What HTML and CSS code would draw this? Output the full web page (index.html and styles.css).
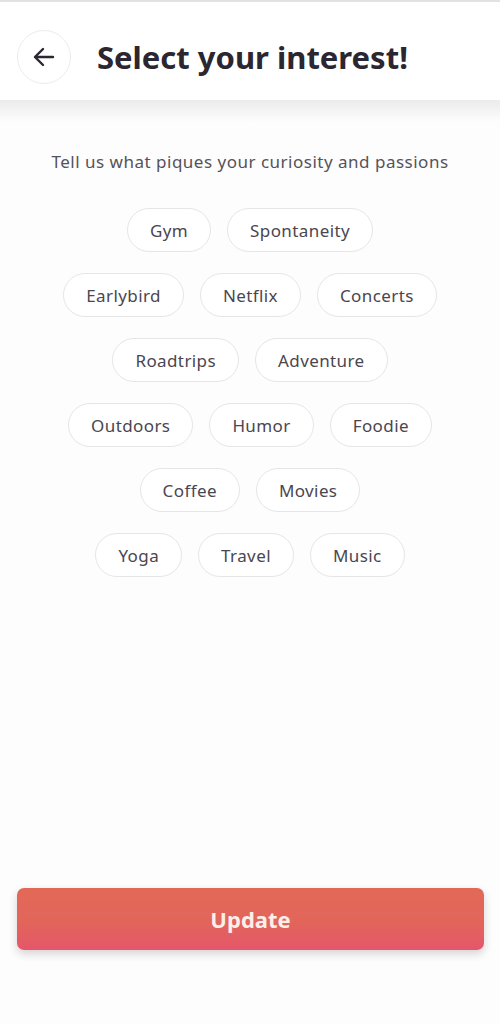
FILE: index.html
```html
<!DOCTYPE html>
<html lang="en">
<head>
  <meta charset="UTF-8">
  <meta name="viewport" content="width=device-width, initial-scale=1.0">
  <title>Select your interest</title>
  <link rel="stylesheet" href="styles.css">
</head>
<body>
  <div class="screen">
    <header class="top-bar">
      <button class="back-button" aria-label="Back">
        <svg width="22" height="20" viewBox="0 0 22 20" fill="none" stroke="#2b2630" stroke-width="2.4" stroke-linecap="round" stroke-linejoin="round">
          <line x1="20" y1="10" x2="2.5" y2="10"/>
          <polyline points="10,2 2,10 10,18"/>
        </svg>
      </button>
      <h1>Select your interest!</h1>
    </header>
    <div class="top-shadow"></div>

    <main class="content">
      <p class="subtitle">Tell us what piques your curiosity and passions</p>

      <div class="interests">
        <div class="interest-row">
          <span class="chip">Gym</span>
          <span class="chip">Spontaneity</span>
        </div>
        <div class="interest-row">
          <span class="chip">Earlybird</span>
          <span class="chip">Netflix</span>
          <span class="chip">Concerts</span>
        </div>
        <div class="interest-row">
          <span class="chip">Roadtrips</span>
          <span class="chip">Adventure</span>
        </div>
        <div class="interest-row">
          <span class="chip">Outdoors</span>
          <span class="chip">Humor</span>
          <span class="chip">Foodie</span>
        </div>
        <div class="interest-row">
          <span class="chip">Coffee</span>
          <span class="chip">Movies</span>
        </div>
        <div class="interest-row">
          <span class="chip">Yoga</span>
          <span class="chip">Travel</span>
          <span class="chip">Music</span>
        </div>
      </div>
    </main>

    <footer class="actions">
      <button class="update-button">Update</button>
    </footer>
  </div>
</body>
</html>
```

FILE: styles.css
```css
:root {
  --text-dark: #2b2630;
  --text-chip: #4a4650;
  --text-muted: #55525a;
  --chip-border: #e6e6e6;
  --accent-top: #e26957;
  --accent-bottom: #e5566a;
}

* {
  box-sizing: border-box;
}

body {
  margin: 0;
  background: #fdfdfd;
  font-family: "Noto Sans", "Open Sans", sans-serif;
  color: var(--text-dark);
}

.screen {
  height: 1024px;
  display: flex;
  flex-direction: column;
  border-top: 2px solid #e2e2e2;
}

.top-bar {
  height: 98px;
  display: flex;
  align-items: center;
  gap: 26px;
  padding: 12px 17px 0;
  background: #fff;
}

.top-shadow {
  height: 22px;
  background: linear-gradient(#ebebeb, rgba(253, 253, 253, 0));
}

.back-button {
  width: 54px;
  height: 54px;
  border-radius: 50%;
  border: 1px solid #ececec;
  background: #fff;
  display: flex;
  align-items: center;
  justify-content: center;
  padding: 0;
}

.top-bar h1 {
  margin: 0;
  font-size: 31px;
  font-weight: 700;
  color: var(--text-dark);
}

.content {
  flex: 1;
  padding-top: 28px;
}

.subtitle {
  margin: 0 0 35px;
  text-align: center;
  font-size: 17px;
  letter-spacing: 0.5px;
  color: var(--text-muted);
}

.interests {
  display: flex;
  flex-direction: column;
  gap: 21px;
}

.interest-row {
  display: flex;
  justify-content: center;
  gap: 16px;
}

.chip {
  height: 44px;
  padding: 0 22px;
  display: flex;
  align-items: center;
  border: 1.5px solid var(--chip-border);
  border-radius: 22px;
  background: #fff;
  font-size: 17px;
  letter-spacing: 0.4px;
  color: var(--text-chip);
}

.actions {
  padding: 0 16px 74px 17px;
}

.update-button {
  width: 100%;
  height: 62px;
  border: none;
  border-radius: 7px;
  background: linear-gradient(var(--accent-top) 0%, #e2655b 55%, var(--accent-bottom) 100%);
  box-shadow: 0 4px 8px rgba(60, 40, 40, 0.2);
  color: #fbefea;
  font-family: "Noto Sans", "Open Sans", sans-serif;
  font-size: 22px;
  font-weight: 700;
}
```
